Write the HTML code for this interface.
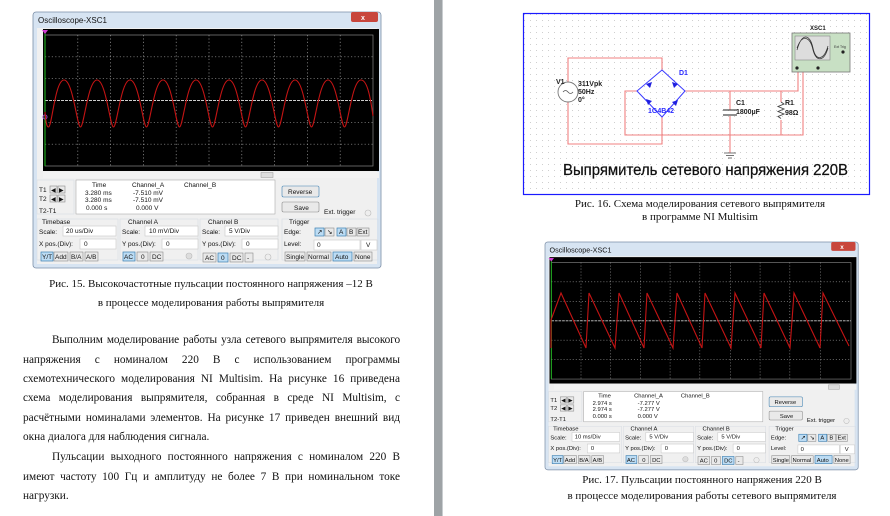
<!DOCTYPE html>
<html><head><meta charset="utf-8"><style>
html,body{margin:0;padding:0;background:#fff;width:890px;height:516px;overflow:hidden;position:relative}
svg{display:block}
.s{font-family:"Liberation Sans",sans-serif;font-size:6.5px;fill:#111}
.c{font-family:"Liberation Serif",serif;font-size:11px;fill:#111}
.b{fill:#e9e9e9;stroke:#8a8a8a;stroke-width:.6}
.bb{fill:#bcdcf4;stroke:#3c7fb1;stroke-width:.7}
.f{fill:#fff;stroke:#c8c8c8;stroke-width:.6}
.g{fill:none;stroke:#d8dde3;stroke-width:.6}
.grid{stroke:#9a9a9a;stroke-width:.7;stroke-dasharray:1.2 2.2}
.ln{position:absolute;left:23px;width:377px;font-family:"Liberation Serif",serif;font-size:11.3px;color:#111;white-space:nowrap;line-height:14px;height:14px;text-align:justify;text-align-last:justify}
.ln.i{left:52px;width:348px}
.ln.e{text-align:left;text-align-last:left}
</style></head><body>
<svg width="890" height="516" viewBox="0 0 890 516" xmlns="http://www.w3.org/2000/svg">
<rect x="434" y="0" width="9" height="516" fill="#9ea3a6"/>
<rect x="442" y="0" width="1" height="516" fill="#c9cdd0"/>

<g transform="translate(33,12)">
<rect x="0" y="0" width="348" height="256" rx="3" fill="#d7e4f2" stroke="#7b8ea6" stroke-width="0.8"/>
<text x="5" y="11" class="s" style="font-size:8px">Oscilloscope-XSC1</text>
<rect x="318" y="0" width="27" height="10" rx="2" fill="#c8463c"/>
<text x="328" y="8" class="s" style="fill:#fff;font-size:7px;font-weight:bold">x</text>
<rect x="4" y="16" width="340" height="236" fill="#f0f0f0"/>
<rect x="10" y="17" width="336" height="142" fill="#000"/>
<rect x="12" y="23" width="328" height="131" fill="none" stroke="#888" stroke-width=".7"/>
<g class="grid">
<line x1="44.8" y1="23" x2="44.8" y2="154"/><line x1="77.6" y1="23" x2="77.6" y2="154"/><line x1="110.4" y1="23" x2="110.4" y2="154"/><line x1="143.2" y1="23" x2="143.2" y2="154"/><line x1="176" y1="23" x2="176" y2="154"/><line x1="208.8" y1="23" x2="208.8" y2="154"/><line x1="241.6" y1="23" x2="241.6" y2="154"/><line x1="274.4" y1="23" x2="274.4" y2="154"/><line x1="307.2" y1="23" x2="307.2" y2="154"/>
<line x1="12" y1="44.8" x2="340" y2="44.8"/><line x1="12" y1="66.7" x2="340" y2="66.7"/><line x1="12" y1="110.3" x2="340" y2="110.3"/><line x1="12" y1="132.2" x2="340" y2="132.2"/>
</g>
<line x1="12" y1="88.5" x2="340" y2="88.5" stroke="#ccc" stroke-width="1" stroke-dasharray="3 1"/>
<line x1="12" y1="18" x2="12" y2="154" stroke="#1fc21f" stroke-width="1"/>
<path d="M9 18 L15 18 L12 22 Z" fill="#d23cd2"/>
<circle cx="12" cy="105" r="2" fill="none" stroke="#a040c0"/>
<path d="M12 100 C13 112,14 115,15.5 115 C19 115,22 68,31 68 C40 68,44 115,47.5 115 C51 115,55 68,64 68 C73 68,77 115,80.5 115 C84 115,88 68,97 68 C106 68,110 115,113.5 115 C117 115,121 68,130 68 C139 68,143 115,146.5 115 C150 115,154 68,163 68 C172 68,176 115,179.5 115 C183 115,187 68,196 68 C205 68,209 115,212.5 115 C216 115,220 68,229 68 C238 68,242 115,245.5 115 C249 115,253 68,262 68 C271 68,275 115,278.5 115 C282 115,286 68,295 68 C304 68,308 115,311.5 115 C315 115,319 68,328 68 C335 68,338 90,340 104" fill="none" stroke="#c41414" stroke-width="1.1"/>
<rect x="10" y="160" width="336" height="6" fill="#f3f3f3"/>
<rect x="228" y="160.5" width="12" height="5" fill="#ddd" stroke="#999" stroke-width=".5"/>
<rect x="4" y="168" width="37" height="34" class="g"/>
<text x="6" y="180" class="s">T1</text><text x="6" y="189" class="s">T2</text><text x="6" y="201" class="s">T2-T1</text>
<rect x="17" y="174" width="7" height="7" class="b"/><rect x="25" y="174" width="7" height="7" class="b"/>
<rect x="17" y="183" width="7" height="7" class="b"/><rect x="25" y="183" width="7" height="7" class="b"/>
<text x="18" y="180" class="s" style="font-size:6px">◀</text><text x="26" y="180" class="s" style="font-size:6px">▶</text>
<text x="18" y="189" class="s" style="font-size:6px">◀</text><text x="26" y="189" class="s" style="font-size:6px">▶</text>
<rect x="43" y="168" width="199" height="34" fill="#fff" stroke="#aaa" stroke-width=".6"/>
<text x="59" y="175" class="s">Time</text><text x="99" y="175" class="s">Channel_A</text><text x="151" y="175" class="s">Channel_B</text>
<text x="52" y="183" class="s">3.280 ms</text><text x="100" y="183" class="s">-7.510 mV</text>
<text x="52" y="190" class="s">3.280 ms</text><text x="100" y="190" class="s">-7.510 mV</text>
<text x="53" y="198" class="s">0.000 s</text><text x="103" y="198" class="s">0.000 V</text>
<rect x="249" y="174" width="37" height="11" rx="1.5" class="b" style="stroke:#3c7fb1"/><text x="255" y="182" class="s">Reverse</text>
<rect x="249" y="190" width="37" height="10" rx="1.5" class="b"/><text x="261" y="198" class="s">Save</text>
<text x="291" y="202" class="s">Ext. trigger</text><circle cx="335" cy="201" r="3" fill="#eee" stroke="#bbb" stroke-width=".6"/>
<rect x="4" y="207" width="81" height="41" class="g"/><rect x="87" y="207" width="78" height="41" class="g"/><rect x="167" y="207" width="78" height="41" class="g"/><rect x="249" y="207" width="96" height="41" class="g"/>
<text x="9" y="212" class="s">Timebase</text><text x="95" y="212" class="s">Channel A</text><text x="175" y="212" class="s">Channel B</text><text x="256" y="212" class="s">Trigger</text>
<text x="6" y="222" class="s">Scale:</text><rect x="30" y="214" width="53" height="10" class="f"/><text x="33" y="221" class="s">20 us/Div</text>
<text x="89" y="222" class="s">Scale:</text><rect x="112" y="214" width="53" height="10" class="f"/><text x="116" y="221" class="s">10 mV/Div</text>
<text x="169" y="222" class="s">Scale:</text><rect x="192" y="214" width="53" height="10" class="f"/><text x="196" y="221" class="s">5  V/Div</text>
<text x="251" y="222" class="s">Edge:</text>
<rect x="282" y="216" width="9" height="8" class="bb"/><rect x="292" y="216" width="9" height="8" class="b"/><rect x="304" y="216" width="9" height="8" class="bb"/><rect x="314" y="216" width="9" height="8" class="b"/><rect x="324" y="216" width="12" height="8" class="b"/>
<text x="284" y="222" class="s">↗</text><text x="294" y="222" class="s">↘</text><text x="306" y="222" class="s">A</text><text x="316" y="222" class="s">B</text><text x="325" y="222" class="s">Ext</text>
<text x="6" y="234" class="s">X pos.(Div):</text><rect x="47" y="227" width="36" height="10" class="f"/><text x="51" y="234" class="s">0</text>
<text x="89" y="234" class="s">Y pos.(Div):</text><rect x="129" y="227" width="36" height="10" class="f"/><text x="133" y="234" class="s">0</text>
<text x="169" y="234" class="s">Y pos.(Div):</text><rect x="209" y="227" width="36" height="10" class="f"/><text x="213" y="234" class="s">0</text>
<text x="251" y="234" class="s">Level:</text><rect x="281" y="228" width="46" height="10" class="f"/><text x="284" y="235" class="s">0</text><rect x="328" y="228" width="16" height="10" class="f"/><text x="333" y="235" class="s">V</text>
<rect x="8" y="240" width="12" height="9" class="bb"/><text x="9" y="247" class="s">Y/T</text>
<rect x="21" y="240" width="14" height="9" class="b"/><text x="22" y="247" class="s">Add</text>
<rect x="37" y="240" width="13" height="9" class="b"/><text x="38" y="247" class="s">B/A</text>
<rect x="52" y="240" width="13" height="9" class="b"/><text x="53" y="247" class="s">A/B</text>
<rect x="90" y="240" width="12" height="9" class="bb"/><text x="91" y="247" class="s">AC</text>
<rect x="104" y="240" width="11" height="9" class="b"/><text x="108" y="247" class="s">0</text>
<rect x="117" y="240" width="13" height="9" class="b"/><text x="119" y="247" class="s">DC</text>
<circle cx="156" cy="244" r="3" fill="#ddd" stroke="#bbb" stroke-width=".6"/>
<rect x="170" y="241" width="13" height="9" class="b"/><text x="172" y="248" class="s">AC</text>
<rect x="185" y="241" width="10" height="9" class="bb"/><text x="188" y="248" class="s">0</text>
<rect x="197" y="241" width="13" height="9" class="b"/><text x="199" y="248" class="s">DC</text>
<rect x="212" y="241" width="8" height="9" class="b"/><text x="214" y="248" class="s">-</text>
<circle cx="235" cy="245" r="3" fill="#eee" stroke="#bbb" stroke-width=".6"/>
<rect x="252" y="240" width="20" height="9" class="b"/><text x="253" y="247" class="s">Single</text>
<rect x="274" y="240" width="24" height="9" class="b"/><text x="275" y="247" class="s">Normal</text>
<rect x="300" y="240" width="19" height="9" class="bb"/><text x="302" y="247" class="s">Auto</text>
<rect x="321" y="240" width="18" height="9" class="b"/><text x="322" y="247" class="s">None</text>
</g>

<text x="211" y="287" class="c" text-anchor="middle">Рис. 15. Высокочастотные пульсации постоянного напряжения –12 В</text>
<text x="211" y="306" class="c" text-anchor="middle">в процессе моделирования работы выпрямителя</text>

<defs><pattern id="dots" width="6" height="6" patternUnits="userSpaceOnUse"><rect x="2" y="2" width="1" height="1" fill="#cfcfcf"/></pattern></defs>
<rect x="523.5" y="13.5" width="346" height="181" fill="url(#dots)" stroke="#1a1aff" stroke-width="1.2"/>
<g fill="none" stroke="#f08080" stroke-width="1.1">
<path d="M568 82 L568 58 L662 58 L662 70"/>
<path d="M568 102 L568 144 L662 144 L662 117"/>
<path d="M685 91 L798 91 L798 70"/>
<path d="M637 91 L625 91 L625 135 L803 135 L803 70"/>
<path d="M730 91 L730 110 M730 116 L730 153"/>
<path d="M781 91 L781 102 M781 120 L781 135"/>
</g>
<circle cx="568" cy="92" r="10" fill="#fff" stroke="#777" stroke-width=".9"/>
<path d="M563 92 q2.5 -3 5 0 t5 0" fill="none" stroke="#555" stroke-width=".8"/>
<path d="M662 70 L685 91 L662 117 L637 91 Z" fill="none" stroke="#3a3aff" stroke-width="1"/>
<g fill="#2020e0"><path d="M646 84 l6 -2 l-2 6z"/><path d="M672 82 l6 2 l-4 4z"/><path d="M646 99 l6 2 l-4 4z"/><path d="M672 102 l6 -2 l-2 6z"/></g>
<g stroke="#444" stroke-width="1.2"><line x1="723" y1="110" x2="737" y2="110"/><line x1="723" y1="115" x2="737" y2="115"/></g>
<path d="M781 102 l3 2 l-6 2.5 l6 2.5 l-6 2.5 l6 2.5 l-6 2.5 l3 2" fill="none" stroke="#444" stroke-width=".9"/>
<g stroke="#666" stroke-width=".9"><line x1="724" y1="153" x2="736" y2="153"/><line x1="726" y1="155.5" x2="734" y2="155.5"/><line x1="728" y1="158" x2="732" y2="158"/></g>
<g font-family="Liberation Sans,sans-serif" font-weight="bold" font-size="7" fill="#222">
<text x="556" y="84">V1</text><text x="578" y="86">311Vpk</text><text x="578" y="94">50Hz</text><text x="578" y="102">0°</text>
<text x="736" y="105">C1</text><text x="736" y="114">1800µF</text>
<text x="785" y="105">R1</text><text x="785" y="115">98Ω</text>
<text x="810" y="30" font-size="6">XSC1</text>
<text x="679" y="75" fill="#2a2aff">D1</text><text x="648" y="113" fill="#2a2aff">1G4B42</text>
</g>
<rect x="792" y="33" width="58" height="39" fill="#c8e0c4" stroke="#777" stroke-width=".8"/>
<rect x="795" y="36" width="35" height="24" fill="#ddd" stroke="#888" stroke-width=".6"/>
<path d="M797 50 C802 32,810 34,813 48 C816 62,824 60,828 46 M797 48 C802 34,810 36,813 50 C816 62,824 62,828 48" fill="none" stroke="#333" stroke-width=".7"/>
<circle cx="797" cy="68" r="1.6" fill="#222"/><circle cx="818" cy="68" r="1.6" fill="#222"/><circle cx="843" cy="52" r="1.6" fill="#222"/>
<text x="834" y="48" font-family="Liberation Sans,sans-serif" font-size="3.5" fill="#333">Ext Trig</text>
<text x="563" y="175" font-family="Liberation Sans,sans-serif" font-size="15.5" fill="#111" stroke="#111" stroke-width=".25" textLength="285" lengthAdjust="spacingAndGlyphs">Выпрямитель сетевого напряжения 220В</text>
<text x="700" y="207" class="c" text-anchor="middle">Рис. 16. Схема моделирования сетевого выпрямителя</text>
<text x="700" y="220" class="c" text-anchor="middle">в программе NI Multisim</text>

<g transform="translate(545,242) scale(0.9,0.89)">
<rect x="0" y="0" width="348" height="256" rx="3" fill="#d7e4f2" stroke="#7b8ea6" stroke-width="0.8"/>
<text x="5" y="12" class="s" style="font-size:8px">Oscilloscope-XSC1</text>
<rect x="318" y="0" width="27" height="10" rx="2" fill="#c8463c"/>
<text x="328" y="8" class="s" style="fill:#fff;font-size:7px;font-weight:bold">x</text>
<rect x="4" y="16" width="340" height="236" fill="#f0f0f0"/>
<rect x="5" y="17" width="341" height="142" fill="#000"/>
<rect x="7" y="23" width="333" height="131" fill="none" stroke="#888" stroke-width=".7"/>
<g class="grid">
<line x1="40" y1="23" x2="40" y2="154"/><line x1="73" y1="23" x2="73" y2="154"/><line x1="106" y1="23" x2="106" y2="154"/><line x1="139" y1="23" x2="139" y2="154"/><line x1="172" y1="23" x2="172" y2="154"/><line x1="206" y1="23" x2="206" y2="154"/><line x1="239" y1="23" x2="239" y2="154"/><line x1="272" y1="23" x2="272" y2="154"/><line x1="306" y1="23" x2="306" y2="154"/>
<line x1="7" y1="44.8" x2="340" y2="44.8"/><line x1="7" y1="66.7" x2="340" y2="66.7"/><line x1="7" y1="110.3" x2="340" y2="110.3"/><line x1="7" y1="132.2" x2="340" y2="132.2"/>
</g>
<line x1="7" y1="88.5" x2="340" y2="88.5" stroke="#ccc" stroke-width="1" stroke-dasharray="3 1"/>
<line x1="7" y1="18" x2="7" y2="154" stroke="#1fc21f" stroke-width="1"/>
<path d="M4 18 L10 18 L7 22 Z" fill="#d23cd2"/>
<rect x="10" y="160" width="336" height="6" fill="#f3f3f3"/>
<rect x="315" y="160.5" width="12" height="5" fill="#ddd" stroke="#999" stroke-width=".5"/>
<rect x="4" y="168" width="37" height="34" class="g"/>
<text x="6" y="180" class="s">T1</text><text x="6" y="189" class="s">T2</text><text x="6" y="201" class="s">T2-T1</text>
<rect x="17" y="174" width="7" height="7" class="b"/><rect x="25" y="174" width="7" height="7" class="b"/>
<rect x="17" y="183" width="7" height="7" class="b"/><rect x="25" y="183" width="7" height="7" class="b"/>
<text x="18" y="180" class="s" style="font-size:6px">◀</text><text x="26" y="180" class="s" style="font-size:6px">▶</text>
<text x="18" y="189" class="s" style="font-size:6px">◀</text><text x="26" y="189" class="s" style="font-size:6px">▶</text>
<rect x="43" y="168" width="199" height="34" fill="#fff" stroke="#aaa" stroke-width=".6"/>
<text x="59" y="175" class="s">Time</text><text x="99" y="175" class="s">Channel_A</text><text x="151" y="175" class="s">Channel_B</text>
<text x="53" y="183" class="s">2.974 s</text><text x="103" y="183" class="s">-7.277 V</text>
<text x="53" y="190" class="s">2.974 s</text><text x="103" y="190" class="s">-7.277 V</text>
<text x="53" y="198" class="s">0.000 s</text><text x="103" y="198" class="s">0.000 V</text>
<rect x="249" y="174" width="37" height="11" rx="1.5" class="b" style="stroke:#3c7fb1"/><text x="255" y="182" class="s">Reverse</text>
<rect x="249" y="190" width="37" height="10" rx="1.5" class="b"/><text x="261" y="198" class="s">Save</text>
<text x="291" y="202" class="s">Ext. trigger</text><circle cx="335" cy="201" r="3" fill="#eee" stroke="#bbb" stroke-width=".6"/>
<rect x="4" y="207" width="81" height="41" class="g"/><rect x="87" y="207" width="78" height="41" class="g"/><rect x="167" y="207" width="78" height="41" class="g"/><rect x="249" y="207" width="96" height="41" class="g"/>
<text x="9" y="212" class="s">Timebase</text><text x="95" y="212" class="s">Channel A</text><text x="175" y="212" class="s">Channel B</text><text x="256" y="212" class="s">Trigger</text>
<text x="6" y="222" class="s">Scale:</text><rect x="30" y="214" width="53" height="10" class="f"/><text x="33" y="221" class="s">10 ms/Div</text>
<text x="89" y="222" class="s">Scale:</text><rect x="112" y="214" width="53" height="10" class="f"/><text x="116" y="221" class="s">5  V/Div</text>
<text x="169" y="222" class="s">Scale:</text><rect x="192" y="214" width="53" height="10" class="f"/><text x="196" y="221" class="s">5  V/Div</text>
<text x="251" y="222" class="s">Edge:</text>
<rect x="282" y="216" width="9" height="8" class="bb"/><rect x="292" y="216" width="9" height="8" class="b"/><rect x="304" y="216" width="9" height="8" class="bb"/><rect x="314" y="216" width="9" height="8" class="b"/><rect x="324" y="216" width="12" height="8" class="b"/>
<text x="284" y="222" class="s">↗</text><text x="294" y="222" class="s">↘</text><text x="306" y="222" class="s">A</text><text x="316" y="222" class="s">B</text><text x="325" y="222" class="s">Ext</text>
<text x="6" y="234" class="s">X pos.(Div):</text><rect x="47" y="227" width="36" height="10" class="f"/><text x="51" y="234" class="s">0</text>
<text x="89" y="234" class="s">Y pos.(Div):</text><rect x="129" y="227" width="36" height="10" class="f"/><text x="133" y="234" class="s">0</text>
<text x="169" y="234" class="s">Y pos.(Div):</text><rect x="209" y="227" width="36" height="10" class="f"/><text x="213" y="234" class="s">0</text>
<text x="251" y="234" class="s">Level:</text><rect x="281" y="228" width="46" height="10" class="f"/><text x="284" y="235" class="s">0</text><rect x="328" y="228" width="16" height="10" class="f"/><text x="333" y="235" class="s">V</text>
<rect x="8" y="240" width="12" height="9" class="bb"/><text x="9" y="247" class="s">Y/T</text>
<rect x="21" y="240" width="14" height="9" class="b"/><text x="22" y="247" class="s">Add</text>
<rect x="37" y="240" width="13" height="9" class="b"/><text x="38" y="247" class="s">B/A</text>
<rect x="52" y="240" width="13" height="9" class="b"/><text x="53" y="247" class="s">A/B</text>
<rect x="90" y="240" width="12" height="9" class="bb"/><text x="91" y="247" class="s">AC</text>
<rect x="104" y="240" width="11" height="9" class="b"/><text x="108" y="247" class="s">0</text>
<rect x="117" y="240" width="13" height="9" class="b"/><text x="119" y="247" class="s">DC</text>
<circle cx="156" cy="244" r="3" fill="#ddd" stroke="#bbb" stroke-width=".6"/>
<rect x="170" y="241" width="13" height="9" class="b"/><text x="172" y="248" class="s">AC</text>
<rect x="185" y="241" width="10" height="9" class="b"/><text x="188" y="248" class="s">0</text>
<rect x="197" y="241" width="13" height="9" class="bb"/><text x="199" y="248" class="s">DC</text>
<rect x="212" y="241" width="8" height="9" class="b"/><text x="214" y="248" class="s">-</text>
<circle cx="235" cy="245" r="3" fill="#eee" stroke="#bbb" stroke-width=".6"/>
<rect x="252" y="240" width="20" height="9" class="b"/><text x="253" y="247" class="s">Single</text>
<rect x="274" y="240" width="24" height="9" class="b"/><text x="275" y="247" class="s">Normal</text>
<rect x="300" y="240" width="19" height="9" class="bb"/><text x="302" y="247" class="s">Auto</text>
<rect x="321" y="240" width="18" height="9" class="b"/><text x="322" y="247" class="s">None</text>
</g>
<path d="M551 348 L551 320 L561 293 L586 348 L589 293 L615 348 L619 293 L644 348 L647 293 L673 348 L677 293 L702 348 L705 293 L731 348 L735 293 L761 348 L764 293 L790 348 L794 293 L820 348 L823 293 L849 346" fill="none" stroke="#c41414" stroke-width="1.1"/>
<text x="702" y="483" class="c" text-anchor="middle">Рис. 17. Пульсации постоянного напряжения 220 В</text>
<text x="702" y="499" class="c" text-anchor="middle">в процессе моделирования работы сетевого выпрямителя</text>
</svg>

<div class="ln i" style="top:333px;letter-spacing:-0.1px">Выполним моделирование работы узла сетевого выпрямителя высокого</div>
<div class="ln" style="top:353px">напряжения с номиналом 220 В с использованием программы</div>
<div class="ln" style="top:372px">схемотехнического моделирования NI Multisim. На рисунке 16 приведена</div>
<div class="ln" style="top:391px">схема моделирования выпрямителя, собранная в среде NI Multisim, с</div>
<div class="ln" style="top:411px">расчётными номиналами элементов. На рисунке 17 приведен внешний вид</div>
<div class="ln e" style="top:430px">окна диалога для наблюдения сигнала.</div>
<div class="ln i" style="top:450px">Пульсации выходного постоянного напряжения с номиналом 220 В</div>
<div class="ln" style="top:470px">имеют частоту 100 Гц и амплитуду не более 7 В при номинальном токе</div>
<div class="ln e" style="top:489px">нагрузки.</div>
</body></html>
